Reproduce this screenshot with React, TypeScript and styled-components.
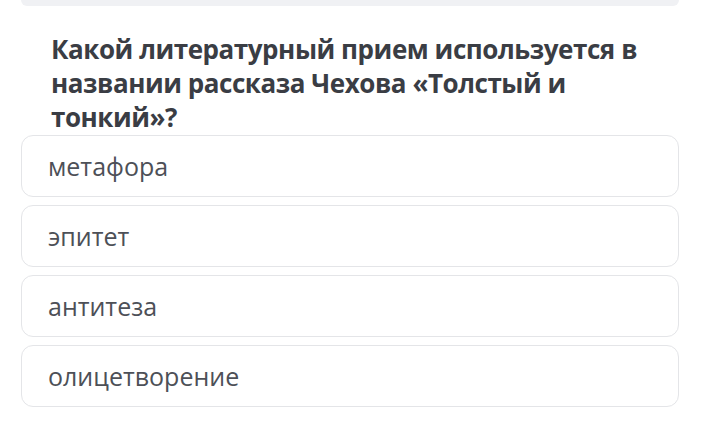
import React from 'react'
import styled, { createGlobalStyle } from 'styled-components'

const GlobalStyle = createGlobalStyle`
  body {
    margin: 0;
    background: #ffffff;
    font-family: "Open Sans", "Noto Sans", sans-serif;
  }
`

const Page = styled.div`
  width: 709px;
  height: 442px;
  padding: 0 30px 0 21px;
  box-sizing: border-box;
  display: flex;
  flex-direction: column;
  overflow: hidden;
`

const TopCard = styled.div`
  height: 6px;
  background: #f0f1f4;
  border-radius: 0 0 12px 12px;
`

const Question = styled.h2`
  margin: 26px 0 1px 30px;
  font-size: 26px;
  line-height: 34px;
  font-weight: 700;
  letter-spacing: -0.45px;
  color: #3a3d44;
`

const Answers = styled.div`
  display: flex;
  flex-direction: column;
  gap: 8px;
`

const Answer = styled.div`
  height: 62px;
  box-sizing: border-box;
  border: 1px solid #e4e5e8;
  border-radius: 12px;
  display: flex;
  align-items: center;
  padding-left: 26px;
  font-size: 25px;
  color: #4d5057;
  background: #ffffff;
`

const options = ['метафора', 'эпитет', 'антитеза', 'олицетворение']

const App: React.FunctionComponent = () => {
    return (
        <Page>
            <GlobalStyle />
            <TopCard />
            <Question>
                Какой литературный прием используется в названии рассказа Чехова «Толстый и тонкий»?
            </Question>
            <Answers>
                {options.map((item, index) => (
                    <Answer key={index}>{item}</Answer>
                ))}
            </Answers>
        </Page>
    )
}

export default App
